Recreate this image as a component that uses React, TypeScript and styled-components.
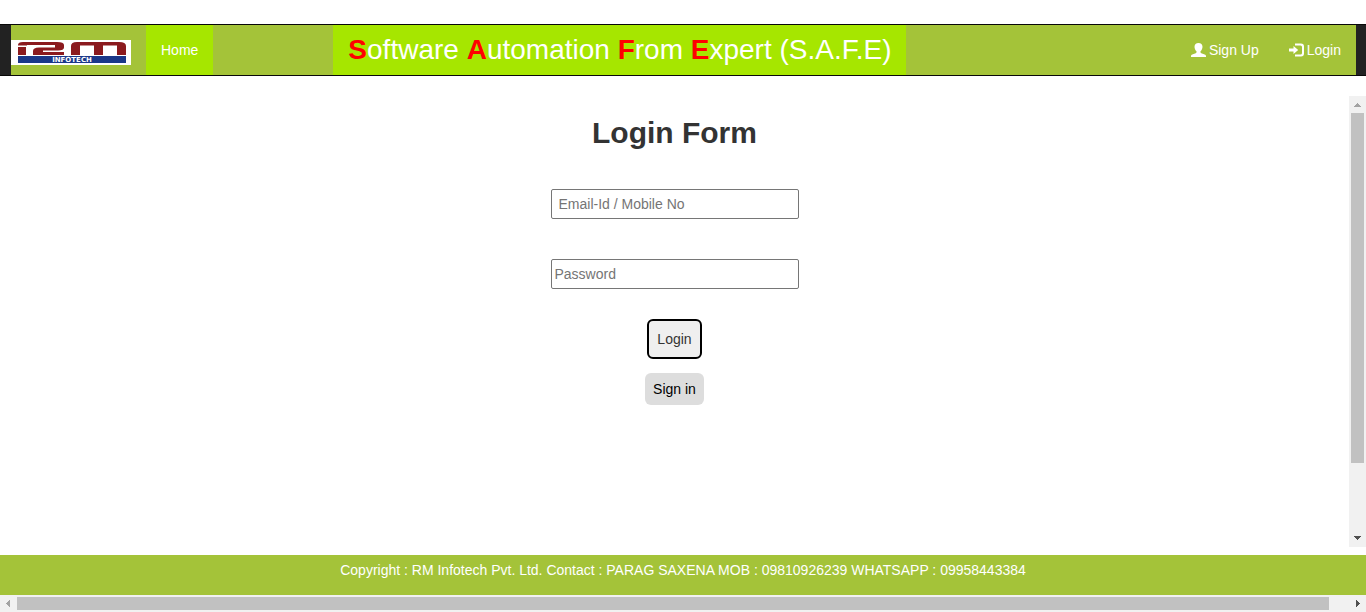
import React from "react";
import styled, { createGlobalStyle } from "styled-components";

const GlobalStyle = createGlobalStyle`
  *, *::before, *::after { box-sizing: border-box; }
  body {
    margin: 0;
    background: #fff;
    color: #333;
    font-family: "Liberation Sans", Arial, sans-serif;
    font-size: 14px;
    line-height: 20px;
  }
`;

const Page = styled.div`
  display: flex;
  flex-direction: column;
  height: 100vh;
  padding-top: 24px;
`;

const Navbar = styled.nav`
  flex: none;
  padding: 0 10px 0 11px;
  background: #222;
  border: solid #080808;
  border-width: 1px 0;
`;

const NavInner = styled.div`
  display: flex;
  height: 50px;
  background: #a4c339;
`;

const Brand = styled.a`
  display: block;
  padding: 15px 15px 0 0;

  svg { display: block; }
`;

const NavLink = styled.a<{ $active?: boolean }>`
  display: flex;
  align-items: center;
  gap: 3px;
  padding: 0 15px;
  color: #fff;
  text-decoration: none;
  background: ${(p) => (p.$active ? "#a6e600" : "transparent")};
`;

const Title = styled.div`
  margin-left: 120px;
  padding: 0 15px;
  background: #a6e600;
  color: #fff;
  font-size: 28px;
  line-height: 50px;
  white-space: nowrap;

  b { color: #f00; }
`;

const NavRight = styled.div`
  display: flex;
  margin-left: auto;
`;

const ScrollPane = styled.main`
  display: flex;
  flex: 1;
  min-height: 0;
  margin: 20px 0 8px;
`;

const Form = styled.form`
  display: flex;
  flex: 1;
  flex-direction: column;
  align-items: center;
`;

const Heading = styled.h1`
  margin: 20px 0 40px;
  font-size: 30px;
  line-height: 33px;
`;

const Field = styled.input<{ $indent?: boolean }>`
  width: 248px;
  height: 30px;
  margin-bottom: 40px;
  padding: 1px 3px 1px ${(p) => (p.$indent ? "7px" : "3px")};
  border: 1px solid #767676;
  border-radius: 2px;
  font: inherit;

  &::placeholder { color: #757575; }
`;

const LoginButton = styled.button`
  height: 40px;
  margin-top: -10px;
  padding: 0 8px;
  background: #efefef;
  border: 2px solid #000;
  border-radius: 6px;
  color: #333;
  font: inherit;
`;

const SignInLink = styled.a`
  margin-top: 14px;
  padding: 6px 8px;
  background: #ddd;
  border-radius: 6px;
  color: #000;
  text-decoration: none;
`;

const Footer = styled.footer`
  flex: none;
  height: 40px;
  padding: 5px 0;
  background: #a4c339;
  color: #fff;
  text-align: center;
`;

const Bar = styled.div<{ $vertical?: boolean }>`
  display: flex;
  flex: none;
  flex-direction: ${(p) => (p.$vertical ? "column" : "row")};
  ${(p) => (p.$vertical ? "width" : "height")}: 17px;
  background: #f1f1f1;

  svg { flex: none; display: block; }
`;

const Track = styled.div<{ $vertical?: boolean }>`
  display: flex;
  flex: 1;
  flex-direction: ${(p) => (p.$vertical ? "column" : "row")};
  padding: ${(p) => (p.$vertical ? "0 2px" : "2px 0")};
`;

const Thumb = styled.div<{ $size: number }>`
  flex: 0 0 ${(p) => p.$size}%;
  background: #c1c1c1;
`;

const arrows = {
  up: "M5 11h7v-1h-1v-1h-1v-1h-1v-1h-1v1h-1v1h-1v1h-1z",
  down: "M5 6h7v1h-1v1h-1v1h-1v1h-1v-1h-1v-1h-1v-1h-1z",
  left: "M10 5v7h-1v-1h-1v-1h-1v-1h-1v-1h1v-1h1v-1h1v-1z",
  right: "M7 5v7h1v-1h1v-1h1v-1h1v-1h-1v-1h-1v-1h-1v-1z",
};

function Arrow({ dir, muted }: { dir: keyof typeof arrows; muted?: boolean }) {
  return (
    <svg width="17" height="17" aria-hidden="true" shapeRendering="crispEdges">
      <path d={arrows[dir]} fill={muted ? "#a3a3a3" : "#505050"} />
    </svg>
  );
}

function Scrollbar({ vertical, size }: { vertical?: boolean; size: number }) {
  return (
    <Bar $vertical={vertical} aria-hidden="true">
      <Arrow dir={vertical ? "up" : "left"} muted />
      <Track $vertical={vertical}>
        <Thumb $size={size} />
      </Track>
      <Arrow dir={vertical ? "down" : "right"} />
    </Bar>
  );
}

function Logo() {
  return (
    <svg width="120" height="25" viewBox="0 0 120 25" role="img" aria-label="RM Infotech">
      <rect width="120" height="25" fill="#fff" />
      <g fill="#8b1a1e">
        <path d="M7 5Q7 2 12 2H46Q53 2 53 5V7.5Q53 10.5 47 10.5H32V12H53V15H22V11Q22 7.5 28 7.5H44V5H16V5.5H7Z" />
        <path d="M7 7H15V15H7Z" />
        <path d="M60 15V6Q60 2 66 2H108Q115 2 115 6V15H106V5.5H92V15H83V5.5H69V15Z" />
      </g>
      <rect x="7" y="16" width="108" height="7" fill="#1a3788" />
      <text x="61" y="22" fill="#fff" textAnchor="middle" fontFamily="DejaVu Sans, sans-serif" fontWeight="bold" fontSize="7">
        INFOTECH
      </text>
    </svg>
  );
}

function UserIcon() {
  return (
    <svg width="15" height="14" viewBox="0 0 15 14" aria-hidden="true">
      <path
        fill="#fff"
        d="M7.5 0C5 0 3.5 1.5 3.5 3.8C3.5 5.7 4.3 7.3 5.5 8.3V9.3C5.5 9.8 5.2 10 4.7 10.2L1.3 11.6C.4 12 0 12.4 0 13V14H15V13C15 12.4 14.6 12 13.7 11.6L10.3 10.2C9.8 10 9.5 9.8 9.5 9.3V8.3C10.7 7.3 11.5 5.7 11.5 3.8C11.5 1.5 10 0 7.5 0Z"
      />
    </svg>
  );
}

function LogInIcon() {
  return (
    <svg width="15" height="14" viewBox="0 0 15 14" aria-hidden="true">
      <path
        fill="#fff"
        d="M6 .5H12Q15 .5 15 3.5V10.5Q15 13.5 12 13.5H6V11.5H11.5Q13 11.5 13 10V4Q13 2.5 11.5 2.5H6ZM4.5 3L9.2 7L4.5 11V8.5H0V5.5H4.5Z"
      />
    </svg>
  );
}

export default function App() {
  return (
    <Page>
      <GlobalStyle />
      <Navbar>
        <NavInner>
          <Brand href="#"><Logo /></Brand>
          <NavLink href="#" $active>Home</NavLink>
          <Title>
            <b>S</b>oftware <b>A</b>utomation <b>F</b>rom <b>E</b>xpert (S.A.F.E)
          </Title>
          <NavRight>
            <NavLink href="#"><UserIcon />Sign Up</NavLink>
            <NavLink href="#"><LogInIcon />Login</NavLink>
          </NavRight>
        </NavInner>
      </Navbar>
      <ScrollPane>
        <Form onSubmit={(e) => e.preventDefault()}>
          <Heading>Login Form</Heading>
          <Field type="text" $indent placeholder="Email-Id / Mobile No" aria-label="Email-Id / Mobile No" />
          <Field type="password" placeholder="Password" aria-label="Password" />
          <LoginButton type="submit">Login</LoginButton>
          <SignInLink href="#">Sign in</SignInLink>
        </Form>
        <Scrollbar vertical size={84} />
      </ScrollPane>
      <Footer>
        Copyright : RM Infotech Pvt. Ltd. Contact : PARAG SAXENA MOB : 09810926239 WHATSAPP : 09958443384
      </Footer>
      <Scrollbar size={98.5} />
    </Page>
  );
}
